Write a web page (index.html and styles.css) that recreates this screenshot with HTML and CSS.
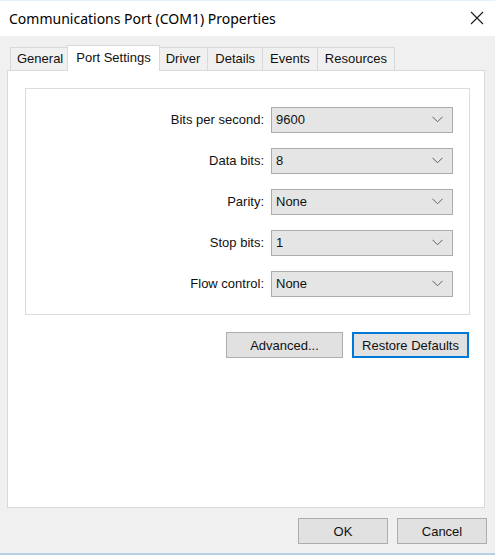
FILE: index.html
```html
<!DOCTYPE html>
<html>
<head>
<meta charset="utf-8">
<link rel="stylesheet" href="styles.css">
</head>
<body>
<div class="window">
  <div class="titlebar">
    <span class="title">Communications Port (COM1) Properties</span>
    <svg class="close" width="14" height="14" viewBox="0 0 14 14"><path d="M1 1 L13 13 M13 1 L1 13" stroke="#1a1a1a" stroke-width="1.1" fill="none"/></svg>
  </div>
  <div class="content">
    <div class="tabs">
      <div class="tab first">General</div>
      <div class="tab active">Port Settings</div>
      <div class="tab">Driver</div>
      <div class="tab">Details</div>
      <div class="tab">Events</div>
      <div class="tab">Resources</div>
    </div>
    <div class="panel">
      <div class="group">
        <label class="lbl">Bits per second:</label>
        <div class="select"><span>9600</span><svg class="chev" width="11" height="7" viewBox="0 0 11 7"><path d="M0.5 0.8 L5.5 5.8 L10.5 0.8" stroke="#606060" stroke-width="1" fill="none"/></svg></div>
        <label class="lbl">Data bits:</label>
        <div class="select"><span>8</span><svg class="chev" width="11" height="7" viewBox="0 0 11 7"><path d="M0.5 0.8 L5.5 5.8 L10.5 0.8" stroke="#606060" stroke-width="1" fill="none"/></svg></div>
        <label class="lbl">Parity:</label>
        <div class="select"><span>None</span><svg class="chev" width="11" height="7" viewBox="0 0 11 7"><path d="M0.5 0.8 L5.5 5.8 L10.5 0.8" stroke="#606060" stroke-width="1" fill="none"/></svg></div>
        <label class="lbl">Stop bits:</label>
        <div class="select"><span>1</span><svg class="chev" width="11" height="7" viewBox="0 0 11 7"><path d="M0.5 0.8 L5.5 5.8 L10.5 0.8" stroke="#606060" stroke-width="1" fill="none"/></svg></div>
        <label class="lbl">Flow control:</label>
        <div class="select"><span>None</span><svg class="chev" width="11" height="7" viewBox="0 0 11 7"><path d="M0.5 0.8 L5.5 5.8 L10.5 0.8" stroke="#606060" stroke-width="1" fill="none"/></svg></div>
      </div>
      <div class="actions">
        <button class="btn">Advanced...</button>
        <button class="btn focus">Restore Defaults</button>
      </div>
    </div>
    <div class="footer">
      <button class="btn small">OK</button>
      <button class="btn small">Cancel</button>
    </div>
  </div>
</div>
</body>
</html>
```

FILE: styles.css
```css
html, body {
  margin: 0;
  padding: 0;
}
body {
  width: 495px;
  height: 555px;
  overflow: hidden;
  background: #f0f0f0;
  font-family: "Liberation Sans", Arial, sans-serif;
  font-size: 13px;
  color: #111;
}
.window {
  height: 555px;
  box-sizing: border-box;
  display: flex;
  flex-direction: column;
  border-bottom: 2px solid #b9cfe2;
}
.titlebar {
  height: 36px;
  flex: none;
  background: #fff;
  display: flex;
  align-items: center;
  justify-content: space-between;
  padding: 0 11px 0 9px;
  border-top: 1px solid #e3f1f8;
  box-sizing: border-box;
}
.title {
  font-family: "Noto Sans", "Open Sans", sans-serif;
  font-size: 14px;
  color: #000;
  margin-top: -1px;
}
.close {
  display: block;
  margin-top: -2px;
}
.content {
  flex: 1;
  padding: 9px 10px 0 7px;
  display: flex;
  flex-direction: column;
}
.tabs {
  display: flex;
  align-items: flex-end;
  height: 25px;
  padding-left: 3px;
  position: relative;
  z-index: 1;
}
.tab {
  height: 23px;
  box-sizing: border-box;
  padding: 0 7px;
  border: 1px solid #d9d9d9;
  border-bottom: none;
  margin-right: -1px;
  background: #f0f0f0;
  line-height: 22px;
  white-space: nowrap;
}
.tab.first {
  padding: 0 6px;
}
.tab.active {
  height: 26px;
  margin: 0 -2px -1px -2px;
  padding: 0 8px;
  background: #fff;
  line-height: 23px;
  position: relative;
  z-index: 2;
}
.panel {
  width: 478px;
  height: 438px;
  box-sizing: border-box;
  background: #fff;
  border: 1px solid #d9d9d9;
  padding: 17px 14px 0 17px;
}
.group {
  height: 227px;
  box-sizing: border-box;
  border: 1px solid #dcdcdc;
  display: grid;
  grid-template-columns: 1fr 182px;
  grid-auto-rows: 25px;
  column-gap: 7px;
  row-gap: 16px;
  padding: 18px 16px 0 0;
  align-items: center;
}
.lbl {
  text-align: right;
  white-space: nowrap;
}
.select {
  height: 26px;
  box-sizing: border-box;
  background: #e5e5e5;
  border: 1px solid #acacac;
  display: flex;
  align-items: center;
  justify-content: space-between;
  padding: 0 9px 0 4px;
}
.chev {
  display: block;
}
.actions {
  display: flex;
  justify-content: flex-end;
  gap: 9px;
  margin-top: 17px;
  padding-right: 1px;
}
.btn {
  font-family: "Liberation Sans", Arial, sans-serif;
  font-size: 13px;
  color: #111;
  width: 117px;
  height: 26px;
  box-sizing: border-box;
  background: #e1e1e1;
  border: 1px solid #adadad;
  padding: 0;
  margin: 0;
}
.btn.focus {
  border: 2px solid #0078d7;
}
.btn.small {
  width: 90px;
}
.footer {
  display: flex;
  justify-content: flex-end;
  gap: 9px;
  margin-top: 10px;
  margin-right: -2px;
}
```
